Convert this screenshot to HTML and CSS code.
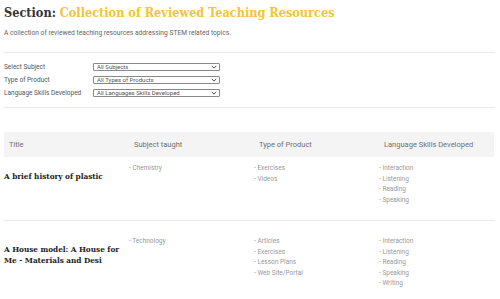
FILE: index.html
```html
<!DOCTYPE html>
<html lang="en">

<head>
    <meta charset="UTF-8" />
    <meta name="viewport" content="width=device-width, initial-scale=1.0" />
    <title>Collection of Reviewed Teaching Resources</title>
    <link rel="stylesheet" href="styles.css">
</head>

<body>
    <div class="page">
        <h1 class="section-title">Section: <span class="accent">Collection of Reviewed Teaching Resources</span></h1>
        <p class="lead">A collection of reviewed teaching resources addressing STEM related topics.</p>

        <form class="filters">
            <div class="filter-row">
                <label for="subject">Select Subject</label>
                <div class="select-wrap">
                    <select id="subject">
                        <option>All Subjects</option>
                    </select>
                    <svg class="chevron" viewBox="0 0 8 5" width="6" height="4"><path d="M1 1l3 3 3-3" /></svg>
                </div>
            </div>
            <div class="filter-row">
                <label for="product">Type of Product</label>
                <div class="select-wrap">
                    <select id="product">
                        <option>All Types of Products</option>
                    </select>
                    <svg class="chevron" viewBox="0 0 8 5" width="6" height="4"><path d="M1 1l3 3 3-3" /></svg>
                </div>
            </div>
            <div class="filter-row">
                <label for="skills">Language Skills Developed</label>
                <div class="select-wrap">
                    <select id="skills">
                        <option>All Languages Skills Developed</option>
                    </select>
                    <svg class="chevron" viewBox="0 0 8 5" width="6" height="4"><path d="M1 1l3 3 3-3" /></svg>
                </div>
            </div>
        </form>

        <table class="resources">
            <colgroup>
                <col class="col-title">
                <col class="col-mid">
                <col class="col-mid">
                <col>
            </colgroup>
            <thead>
                <tr>
                    <th>Title</th>
                    <th>Subject taught</th>
                    <th>Type of Product</th>
                    <th>Language Skills Developed</th>
                </tr>
            </thead>
            <tbody>
                <tr>
                    <td><h3 class="res-title">A brief history of plastic</h3></td>
                    <td>
                        <ul class="tags">
                            <li>- Chemistry</li>
                        </ul>
                    </td>
                    <td>
                        <ul class="tags">
                            <li>- Exercises</li>
                            <li>- Videos</li>
                        </ul>
                    </td>
                    <td>
                        <ul class="tags">
                            <li>- Interaction</li>
                            <li>- Listening</li>
                            <li>- Reading</li>
                            <li>- Speaking</li>
                        </ul>
                    </td>
                </tr>
                <tr>
                    <td><h3 class="res-title">A House model: A House for Me - Materials and Desi</h3></td>
                    <td>
                        <ul class="tags">
                            <li>- Technology</li>
                        </ul>
                    </td>
                    <td>
                        <ul class="tags">
                            <li>- Articles</li>
                            <li>- Exercises</li>
                            <li>- Lesson Plans</li>
                            <li>- Web Site/Portal</li>
                        </ul>
                    </td>
                    <td>
                        <ul class="tags">
                            <li>- Interaction</li>
                            <li>- Listening</li>
                            <li>- Reading</li>
                            <li>- Speaking</li>
                            <li>- Writing</li>
                        </ul>
                    </td>
                </tr>
            </tbody>
        </table>
    </div>
</body>

</html>
```

FILE: styles.css
```css
:root {
    --accent: #f6c23e;
    --heading: #333;
    --text: #666;
    --muted: #999;
    --line: #e8e8e8;
    --head-bg: #f4f4f4;
}

* {
    box-sizing: border-box;
}

body {
    margin: 0;
    font-family: Roboto, 'Noto Sans', sans-serif;
    background: white;
    color: var(--text);
}

.page {
    padding: 0 6px 0 4px;
}

.section-title {
    margin: 5px 0 0;
    font-family: 'DejaVu Serif Condensed', 'DejaVu Serif', serif;
    font-stretch: condensed;
    font-size: 12.6px;
    line-height: 16px;
    font-weight: bold;
    color: var(--heading);
}

.accent {
    color: var(--accent);
}

.lead {
    margin: 8px 0 0;
    font-size: 6.7px;
    line-height: 9px;
    color: var(--text);
}

.filters {
    margin-top: 14px;
    padding: 10px 0 10px;
    border-top: 1px solid var(--line);
    border-bottom: 1px solid var(--line);
    display: flex;
    flex-direction: column;
    gap: 5px;
}

.filter-row {
    display: flex;
    align-items: center;
    height: 8px;
}

.filter-row label {
    width: 89px;
    font-size: 6.5px;
    color: #555;
}

.select-wrap {
    position: relative;
    width: 127px;
    height: 8px;
}

.select-wrap select {
    appearance: none;
    -webkit-appearance: none;
    display: block;
    width: 100%;
    height: 8px;
    margin: 0;
    padding: 0 0 0 3px;
    border: 1px solid #888;
    border-radius: 1px;
    background: white;
    font-family: Roboto, sans-serif;
    font-size: 6px;
    line-height: 6px;
    color: #555;
}

.chevron {
    position: absolute;
    right: 3px;
    top: 2px;
    fill: none;
    stroke: #444;
    stroke-width: 1.3;
}

.resources {
    width: 490px;
    margin-top: 24px;
    border-collapse: collapse;
    table-layout: fixed;
}

.col-title,
.col-mid {
    width: 125px;
}

.resources th {
    height: 25px;
    padding: 0 0 0 5px;
    background: var(--head-bg);
    text-align: left;
    font-size: 7.5px;
    font-weight: normal;
    color: #707070;
}

.resources td {
    padding: 15px 0;
    vertical-align: top;
    border-bottom: 1px solid var(--line);
}

.resources tbody tr:first-child td {
    padding-top: 6px;
}

.res-title {
    margin: 8px 4px 0 0;
    font-family: 'DejaVu Serif Condensed', 'DejaVu Serif', serif;
    font-stretch: condensed;
    font-size: 8.2px;
    letter-spacing: -0.05px;
    line-height: 10.5px;
    font-weight: bold;
    color: #222;
}

.tags {
    margin: 0;
    padding: 0;
    list-style: none;
    font-size: 6.5px;
    line-height: 10.5px;
    color: var(--muted);
}
```
